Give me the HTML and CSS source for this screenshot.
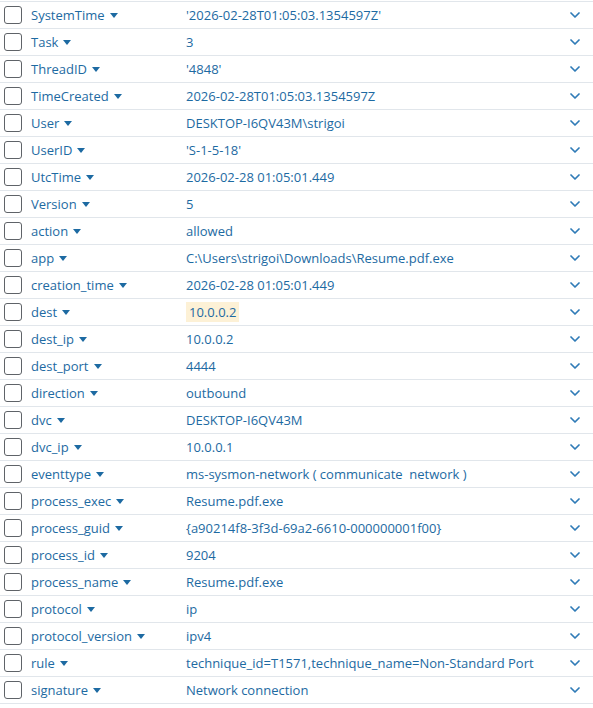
FILE: index.html
```html
<!DOCTYPE html>
<html>
<head>
<meta charset="utf-8">
<link rel="stylesheet" href="styles.css">
</head>
<body>
<div class="fields">
  <div class="row"><span class="cb"></span><span class="key">SystemTime<i class="caret"></i></span><span class="val">'2026-02-28T01:05:03.1354597Z'</span><svg class="chev" viewBox="0 0 10 6"><polyline points="1,1 5,5 9,1"/></svg></div>
  <div class="row"><span class="cb"></span><span class="key">Task<i class="caret"></i></span><span class="val">3</span><svg class="chev" viewBox="0 0 10 6"><polyline points="1,1 5,5 9,1"/></svg></div>
  <div class="row"><span class="cb"></span><span class="key">ThreadID<i class="caret"></i></span><span class="val">'4848'</span><svg class="chev" viewBox="0 0 10 6"><polyline points="1,1 5,5 9,1"/></svg></div>
  <div class="row"><span class="cb"></span><span class="key">TimeCreated<i class="caret"></i></span><span class="val">2026-02-28T01:05:03.1354597Z</span><svg class="chev" viewBox="0 0 10 6"><polyline points="1,1 5,5 9,1"/></svg></div>
  <div class="row"><span class="cb"></span><span class="key">User<i class="caret"></i></span><span class="val">DESKTOP-I6QV43M\strigoi</span><svg class="chev" viewBox="0 0 10 6"><polyline points="1,1 5,5 9,1"/></svg></div>
  <div class="row"><span class="cb"></span><span class="key">UserID<i class="caret"></i></span><span class="val">'S-1-5-18'</span><svg class="chev" viewBox="0 0 10 6"><polyline points="1,1 5,5 9,1"/></svg></div>
  <div class="row"><span class="cb"></span><span class="key">UtcTime<i class="caret"></i></span><span class="val">2026-02-28 01:05:01.449</span><svg class="chev" viewBox="0 0 10 6"><polyline points="1,1 5,5 9,1"/></svg></div>
  <div class="row"><span class="cb"></span><span class="key">Version<i class="caret"></i></span><span class="val">5</span><svg class="chev" viewBox="0 0 10 6"><polyline points="1,1 5,5 9,1"/></svg></div>
  <div class="row"><span class="cb"></span><span class="key">action<i class="caret"></i></span><span class="val">allowed</span><svg class="chev" viewBox="0 0 10 6"><polyline points="1,1 5,5 9,1"/></svg></div>
  <div class="row"><span class="cb"></span><span class="key">app<i class="caret"></i></span><span class="val">C:\Users\strigoi\Downloads\Resume.pdf.exe</span><svg class="chev" viewBox="0 0 10 6"><polyline points="1,1 5,5 9,1"/></svg></div>
  <div class="row"><span class="cb"></span><span class="key">creation_time<i class="caret"></i></span><span class="val">2026-02-28 01:05:01.449</span><svg class="chev" viewBox="0 0 10 6"><polyline points="1,1 5,5 9,1"/></svg></div>
  <div class="row"><span class="cb"></span><span class="key">dest<i class="caret"></i></span><span class="val"><span class="hl">10.0.0.2</span></span><svg class="chev" viewBox="0 0 10 6"><polyline points="1,1 5,5 9,1"/></svg></div>
  <div class="row"><span class="cb"></span><span class="key">dest_ip<i class="caret"></i></span><span class="val">10.0.0.2</span><svg class="chev" viewBox="0 0 10 6"><polyline points="1,1 5,5 9,1"/></svg></div>
  <div class="row"><span class="cb"></span><span class="key">dest_port<i class="caret"></i></span><span class="val">4444</span><svg class="chev" viewBox="0 0 10 6"><polyline points="1,1 5,5 9,1"/></svg></div>
  <div class="row"><span class="cb"></span><span class="key">direction<i class="caret"></i></span><span class="val">outbound</span><svg class="chev" viewBox="0 0 10 6"><polyline points="1,1 5,5 9,1"/></svg></div>
  <div class="row"><span class="cb"></span><span class="key">dvc<i class="caret"></i></span><span class="val">DESKTOP-I6QV43M</span><svg class="chev" viewBox="0 0 10 6"><polyline points="1,1 5,5 9,1"/></svg></div>
  <div class="row"><span class="cb"></span><span class="key">dvc_ip<i class="caret"></i></span><span class="val">10.0.0.1</span><svg class="chev" viewBox="0 0 10 6"><polyline points="1,1 5,5 9,1"/></svg></div>
  <div class="row"><span class="cb"></span><span class="key">eventtype<i class="caret"></i></span><span class="val">ms-sysmon-network <span class="tags">( communicate &nbsp;network )</span></span><svg class="chev" viewBox="0 0 10 6"><polyline points="1,1 5,5 9,1"/></svg></div>
  <div class="row"><span class="cb"></span><span class="key">process_exec<i class="caret"></i></span><span class="val">Resume.pdf.exe</span><svg class="chev" viewBox="0 0 10 6"><polyline points="1,1 5,5 9,1"/></svg></div>
  <div class="row"><span class="cb"></span><span class="key">process_guid<i class="caret"></i></span><span class="val">{a90214f8-3f3d-69a2-6610-000000001f00}</span><svg class="chev" viewBox="0 0 10 6"><polyline points="1,1 5,5 9,1"/></svg></div>
  <div class="row"><span class="cb"></span><span class="key">process_id<i class="caret"></i></span><span class="val">9204</span><svg class="chev" viewBox="0 0 10 6"><polyline points="1,1 5,5 9,1"/></svg></div>
  <div class="row"><span class="cb"></span><span class="key">process_name<i class="caret"></i></span><span class="val">Resume.pdf.exe</span><svg class="chev" viewBox="0 0 10 6"><polyline points="1,1 5,5 9,1"/></svg></div>
  <div class="row"><span class="cb"></span><span class="key">protocol<i class="caret"></i></span><span class="val">ip</span><svg class="chev" viewBox="0 0 10 6"><polyline points="1,1 5,5 9,1"/></svg></div>
  <div class="row"><span class="cb"></span><span class="key">protocol_version<i class="caret"></i></span><span class="val">ipv4</span><svg class="chev" viewBox="0 0 10 6"><polyline points="1,1 5,5 9,1"/></svg></div>
  <div class="row"><span class="cb"></span><span class="key">rule<i class="caret"></i></span><span class="val">technique_id=T1571,technique_name=Non-Standard Port</span><svg class="chev" viewBox="0 0 10 6"><polyline points="1,1 5,5 9,1"/></svg></div>
  <div class="row"><span class="cb"></span><span class="key">signature<i class="caret"></i></span><span class="val">Network connection</span><svg class="chev" viewBox="0 0 10 6"><polyline points="1,1 5,5 9,1"/></svg></div>
</div>
</body>
</html>
```
FILE: styles.css
```css
html, body {
  margin: 0;
  padding: 0;
  background: #ffffff;
}
body {
  font-family: "Open Sans", "Liberation Sans", sans-serif;
  font-size: 13px;
  color: #1d6aa2;
}
.fields {
  padding-top: 1px;
}
.fields .row:first-child {
  border-top: 1px solid #e1e6eb;
}
.row {
  display: grid;
  grid-template-columns: 31px 155px 1fr 40px;
  align-items: center;
  height: 26px;
  border-bottom: 1px solid #e1e6eb;
}
.cb {
  box-sizing: border-box;
  width: 18px;
  height: 18px;
  margin-left: 4px;
  border: 1.5px solid #5f6368;
  border-radius: 3px;
}
.key {
  white-space: nowrap;
  display: flex;
  align-items: center;
}
.caret {
  display: inline-block;
  width: 0;
  height: 0;
  margin-left: 5px;
  border-left: 4px solid transparent;
  border-right: 4px solid transparent;
  border-top: 5px solid #1d6aa2;
}
.val {
  white-space: nowrap;
}
.hl {
  background: #fdf1d6;
  padding: 1px 3px;
}
.tags {
  color: #1d6aa2;
}
.chev {
  width: 10px;
  height: 6px;
  margin-left: 17px;
  fill: none;
  stroke: #2f7bb7;
  stroke-width: 1.7;
  stroke-linecap: round;
  stroke-linejoin: round;
}
```
